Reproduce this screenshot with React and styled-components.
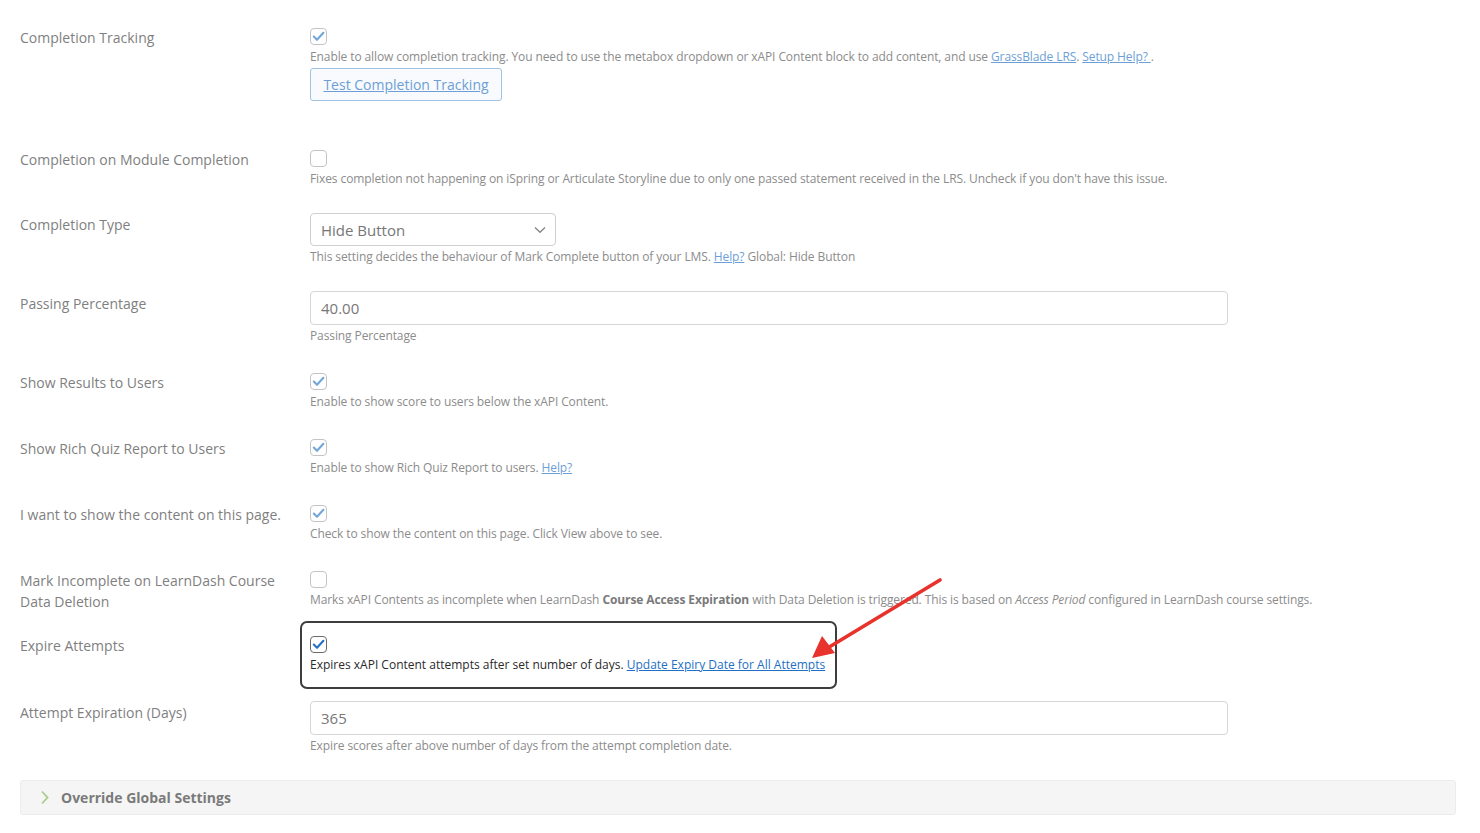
import React from "react";
import styled, { createGlobalStyle } from "styled-components";

const Global = createGlobalStyle`
  html, body { margin: 0; padding: 0; background: #fff; }
  body { font-family: "Open Sans", "Noto Sans", sans-serif; }
  * { box-sizing: border-box; }
`;

const Page = styled.div`
  position: relative;
  width: 1480px;
  height: 833px;
  overflow: hidden;
  padding: 28px 24px 0 20px;
`;

const Row = styled.div`
  display: grid;
  grid-template-columns: 290px 1fr;
  padding-bottom: ${(p) => p.$pb ?? 28}px;
`;

const Label = styled.div`
  font-size: 14px;
  line-height: 21px;
  color: #7f7f7f;
  margin-top: ${(p) => p.$pt ?? -1}px;
  padding-right: 10px;
`;

const Field = styled.div`
  position: relative;
  display: flex;
  flex-direction: column;
  align-items: flex-start;
`;

const Box = styled.span`
  width: 17px;
  height: 17px;
  border-radius: 4px;
  border: 1px solid ${(p) => (p.$strong ? "#6b6b6b" : "#c4c4c4")};
  background: #fff;
  display: flex;
  align-items: center;
  justify-content: center;
`;

const Desc = styled.div`
  margin-top: ${(p) => p.$mt ?? 3}px;
  font-size: 12px;
  line-height: 18px;
  letter-spacing: ${(p) => (p.$strong ? "0" : "-0.1px")};
  color: ${(p) => (p.$strong ? "#2a2a2a" : "#8c8c8c")};
  white-space: nowrap;
  b { font-weight: 700; color: ${(p) => (p.$strong ? "#2a2a2a" : "#7a7a7a")}; }
`;

const Link = styled.a`
  color: ${(p) => (p.$strong ? "#1f6fc5" : "#6d9fd6")};
  text-decoration: underline;
  cursor: pointer;
`;

const OutlineButton = styled.button`
  margin-top: 2px;
  margin-bottom: 21px;
  height: 33px;
  width: 192px;
  padding: 0;
  border: 1px solid #9fc1e4;
  border-radius: 3px;
  background: #f8fafd;
  font-family: inherit;
  font-size: 14px;
  color: #6d9fd6;
  text-decoration: underline;
`;

const Select = styled.div`
  width: 246px;
  height: 33px;
  border: 1px solid #cfcfcf;
  border-radius: 4px;
  display: flex;
  align-items: center;
  justify-content: space-between;
  padding: 0 9px 0 10px;
  font-size: 15px;
  color: #777;
`;

const Input = styled.div`
  width: 918px;
  height: 34px;
  border: 1px solid #d6d6d6;
  border-radius: 4px;
  display: flex;
  align-items: center;
  padding: 0 10px;
  font-size: 15px;
  color: #777;
`;

const Highlight = styled.div`
  position: absolute;
  left: -10px;
  top: -15px;
  width: 537px;
  height: 68px;
  border: 2.5px solid #3d3d3d;
  border-radius: 7px;
  pointer-events: none;
`;

const Panel = styled.div`
  width: 1436px;
  height: 35px;
  background: #f5f5f5;
  border: 1px solid #ececec;
  border-radius: 3px;
  display: flex;
  align-items: center;
  gap: 11px;
  padding-left: 19px;
  font-size: 14px;
  font-weight: 700;
  color: #7a7a7a;
`;

const Arrow = styled.svg`
  position: absolute;
  left: 800px;
  top: 570px;
  pointer-events: none;
`;

const Check = ({ strong }) => (
  <svg width="13" height="11" viewBox="0 0 13 11">
    <path
      d="M1.8 5.6 L5 8.8 L11.4 1.8"
      fill="none"
      stroke={strong ? "#2471c3" : "#74a6d9"}
      strokeWidth="2.1"
      strokeLinecap="round"
      strokeLinejoin="round"
    />
  </svg>
);

const CheckBox = ({ checked, strong }) => (
  <Box $strong={strong}>{checked && <Check strong={strong} />}</Box>
);

export default function App() {
  return (
    <>
      <Global />
      <Page>
        <Row>
          <Label>Completion Tracking</Label>
          <Field>
            <CheckBox checked />
            <Desc>
              Enable to allow completion tracking. You need to use the metabox dropdown or xAPI Content block to add content, and use{" "}
              <Link>GrassBlade LRS</Link>. <Link>Setup Help? </Link>.
            </Desc>
            <OutlineButton>Test Completion Tracking</OutlineButton>
          </Field>
        </Row>
        <Row $pb={25}>
          <Label>Completion on Module Completion</Label>
          <Field>
            <CheckBox />
            <Desc>
              Fixes completion not happening on iSpring or Articulate Storyline due to only one passed statement received in the LRS. Uncheck if you don't have this issue.
            </Desc>
          </Field>
        </Row>
        <Row $pb={25}>
          <Label $pt={1}>Completion Type</Label>
          <Field>
            <Select>
              Hide Button
              <svg width="12" height="8" viewBox="0 0 12 8">
                <path d="M1 1.5 L6 6.2 L11 1.5" fill="none" stroke="#888" strokeWidth="1.4" />
              </svg>
            </Select>
            <Desc $mt={2}>
              This setting decides the behaviour of Mark Complete button of your LMS. <Link>Help?</Link> Global: Hide Button
            </Desc>
          </Field>
        </Row>
        <Row>
          <Label $pt={2}>Passing Percentage</Label>
          <Field>
            <Input>40.00</Input>
            <Desc $mt={2}>Passing Percentage</Desc>
          </Field>
        </Row>
        <Row>
          <Label>Show Results to Users</Label>
          <Field>
            <CheckBox checked />
            <Desc>Enable to show score to users below the xAPI Content.</Desc>
          </Field>
        </Row>
        <Row>
          <Label>Show Rich Quiz Report to Users</Label>
          <Field>
            <CheckBox checked />
            <Desc>
              Enable to show Rich Quiz Report to users. <Link>Help?</Link>
            </Desc>
          </Field>
        </Row>
        <Row>
          <Label>I want to show the content on this page.</Label>
          <Field>
            <CheckBox checked />
            <Desc>Check to show the content on this page. Click View above to see.</Desc>
          </Field>
        </Row>
        <Row $pb={24}>
          <Label>Mark Incomplete on LearnDash Course Data Deletion</Label>
          <Field>
            <CheckBox />
            <Desc>
              Marks xAPI Contents as incomplete when LearnDash <b>Course Access Expiration</b> with Data Deletion is triggered. This is based on <i>Access Period</i> configured in LearnDash course settings.
            </Desc>
          </Field>
        </Row>
        <Row $pb={27}>
          <Label>Expire Attempts</Label>
          <Field>
            <Highlight />
            <CheckBox checked strong />
            <Desc $strong>
              Expires xAPI Content attempts after set number of days. <Link $strong>Update Expiry Date for All Attempts</Link>
            </Desc>
          </Field>
        </Row>
        <Row $pb={25}>
          <Label $pt={1}>Attempt Expiration (Days)</Label>
          <Field>
            <Input>365</Input>
            <Desc $mt={2}>Expire scores after above number of days from the attempt completion date.</Desc>
          </Field>
        </Row>
        <Panel>
          <svg width="10" height="15" viewBox="0 0 10 15">
            <path d="M2 1.5 L7.5 7.5 L2 13.5" fill="none" stroke="#a9cc8c" strokeWidth="1.8" />
          </svg>
          Override Global Settings
        </Panel>
        <Arrow width="160" height="100" viewBox="0 0 160 100">
          <line x1="140" y1="10" x2="26" y2="79" stroke="#e8322c" strokeWidth="3.6" strokeLinecap="round" />
          <polygon points="12,88 22,66 35,83" fill="#e8322c" />
        </Arrow>
      </Page>
    </>
  );
}
